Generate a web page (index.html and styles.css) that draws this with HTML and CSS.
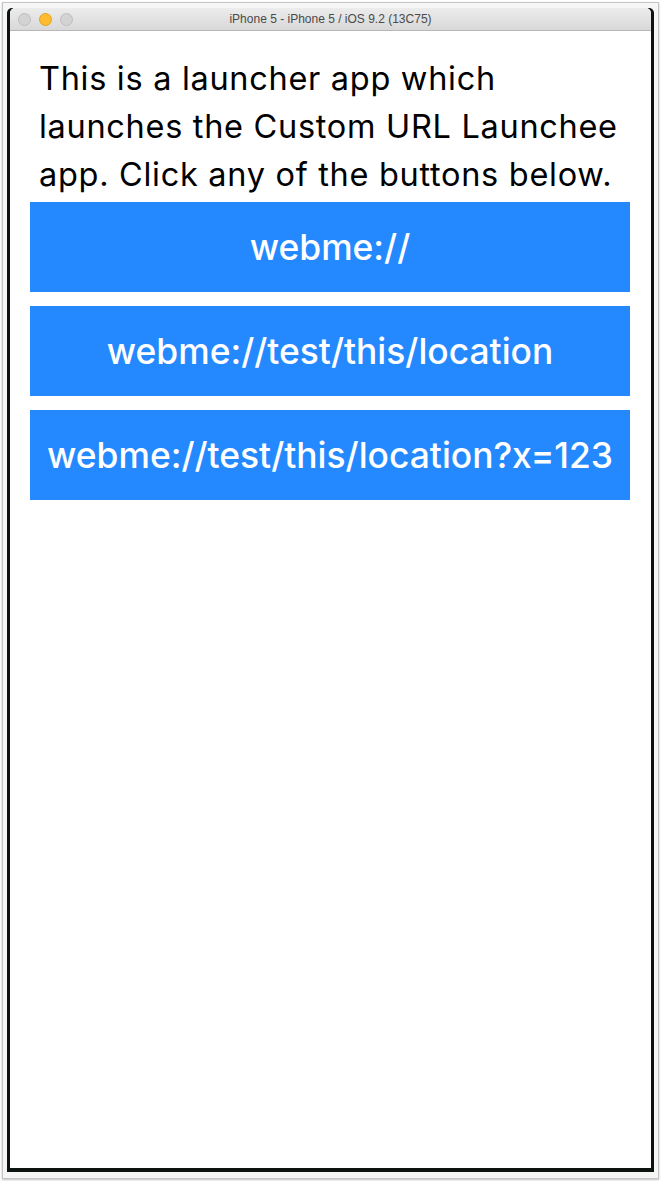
FILE: index.html
```html
<!DOCTYPE html>
<html lang="en">
<head>
    <meta charset="UTF-8">
    <meta name="viewport" content="width=device-width, initial-scale=1.0">
    <title>Custom URL Launcher</title>
    <link rel="stylesheet" href="styles.css">
</head>
<body>

    <div class="frame">
        <div class="desk">
            <!-- simulator window -->
            <div class="window">
                <div class="titlebar">
                    <div class="lights">
                        <span class="light"></span>
                        <span class="light yellow"></span>
                        <span class="light"></span>
                    </div>
                    <div class="title">iPhone 5 - iPhone 5 / iOS 9.2 (13C75)</div>
                </div>

                <div class="screen">
                    <p class="intro">This is a launcher app which<br>launches the Custom URL Launchee<br>app. Click any of the buttons below.</p>

                    <div class="buttons">
                        <button class="launch">webme://</button>
                        <button class="launch">webme://test/this/location</button>
                        <button class="launch">webme://test/this/location?x=123</button>
                    </div>
                </div>
            </div>
        </div>
    </div>

</body>
</html>
```

FILE: styles.css
```css
body {
    margin: 0;
    padding: 0;
    background-color: #ffffff;
    font-family: Inter, "Noto Sans", sans-serif;
}

.frame {
    margin: 2px;
    height: 1177px;
    border: 1px solid #c4c4c4;
    background-color: #f6f6f6;
    box-shadow: 0 1px 2px rgba(0, 0, 0, 0.25);
    padding: 5px 4px 6px 4px;
    box-sizing: border-box;
}

.desk {
    height: 100%;
    background-color: #0d130f;
    border-radius: 5px 5px 0 0;
    padding: 0 3px 4px 3px;
    box-sizing: border-box;
}

.window {
    height: 100%;
    display: flex;
    flex-direction: column;
    background-color: #fff;
    border-radius: 5px 5px 0 0;
    overflow: hidden;
}

.titlebar {
    height: 22px;
    flex-shrink: 0;
    display: flex;
    align-items: center;
    position: relative;
    background: linear-gradient(#ececec, #d8d8d8);
    border-bottom: 1px solid #b8b8b8;
    border-radius: 5px 5px 0 0;
}

.lights {
    display: flex;
    gap: 8px;
    padding-left: 8px;
}

.light {
    width: 11px;
    height: 11px;
    border-radius: 50%;
    background-color: #d3d3d3;
    border: 1px solid #bdbdbd;
}

.light.yellow {
    background-color: #fdbc2d;
    border-color: #e0a120;
}

.title {
    position: absolute;
    left: 0;
    right: 0;
    text-align: center;
    font-family: "Liberation Sans", Arial, sans-serif;
    font-size: 12px;
    color: #4a4a4a;
}

.screen {
    flex-grow: 1;
    padding: 0 20px;
}

.intro {
    margin: 24px 0 0 0;
    padding: 0 0 0 9px;
    font-size: 32.5px;
    line-height: 48px;
    letter-spacing: 0.7px;
    white-space: nowrap;
    color: #000;
}

.buttons {
    display: flex;
    flex-direction: column;
    gap: 14px;
    margin-top: 3px;
    width: 600px;
}

.launch {
    height: 90px;
    border: none;
    background-color: #2489ff;
    color: #fff;
    font-family: Inter, "Noto Sans", sans-serif;
    font-size: 35.4px;
    font-weight: 500;
    padding: 0;
    cursor: pointer;
}
```
